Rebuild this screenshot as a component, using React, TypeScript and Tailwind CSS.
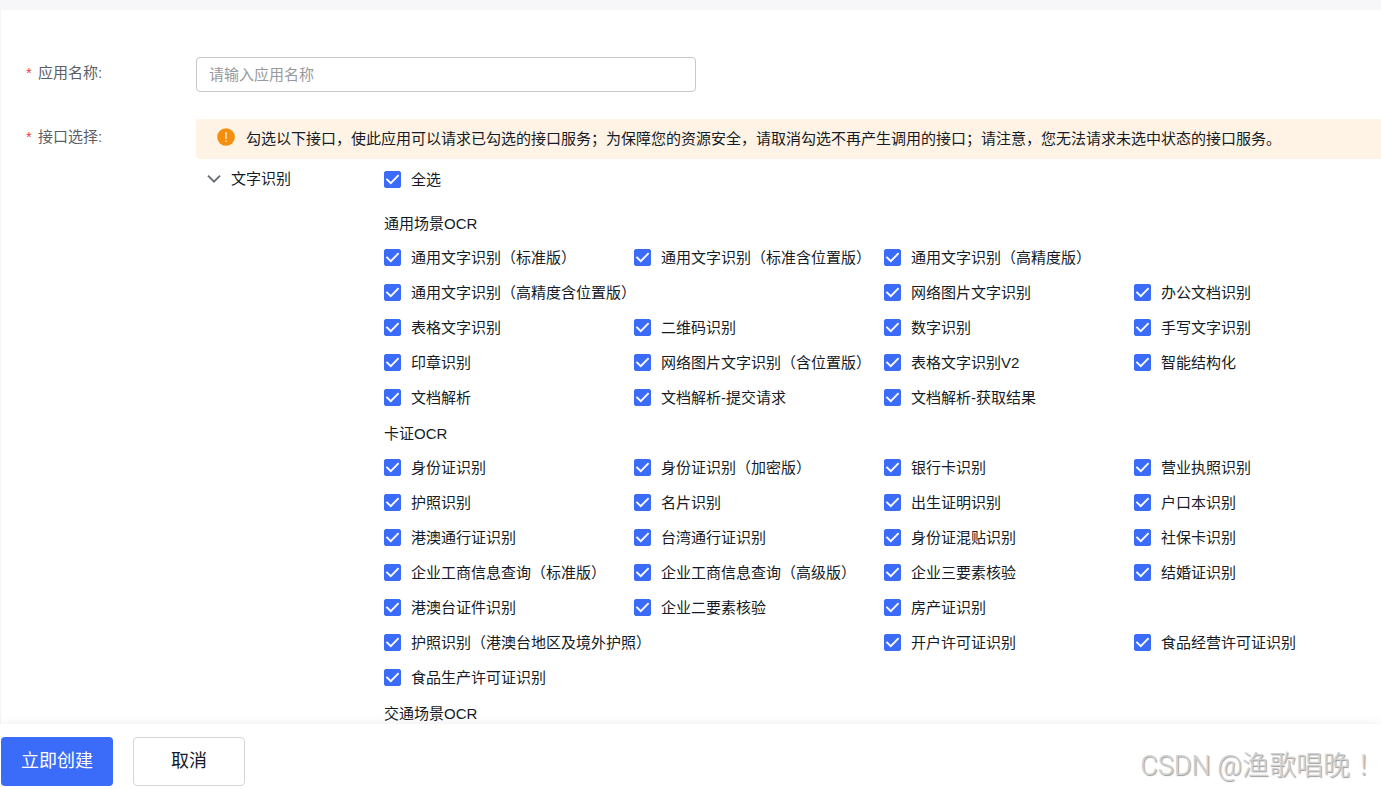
import { useId } from "react";

type Item = { name: string; wide?: boolean };
type Group = { title: string; items: Item[] };

const groups: Group[] = [
  {
    title: "通用场景OCR",
    items: [
      { name: "通用文字识别（标准版）" },
      { name: "通用文字识别（标准含位置版）" },
      { name: "通用文字识别（高精度版）" },
      { name: "通用文字识别（高精度含位置版）", wide: true },
      { name: "网络图片文字识别" },
      { name: "办公文档识别" },
      { name: "表格文字识别" },
      { name: "二维码识别" },
      { name: "数字识别" },
      { name: "手写文字识别" },
      { name: "印章识别" },
      { name: "网络图片文字识别（含位置版）" },
      { name: "表格文字识别V2" },
      { name: "智能结构化" },
      { name: "文档解析" },
      { name: "文档解析-提交请求" },
      { name: "文档解析-获取结果" },
    ],
  },
  {
    title: "卡证OCR",
    items: [
      { name: "身份证识别" },
      { name: "身份证识别（加密版）" },
      { name: "银行卡识别" },
      { name: "营业执照识别" },
      { name: "护照识别" },
      { name: "名片识别" },
      { name: "出生证明识别" },
      { name: "户口本识别" },
      { name: "港澳通行证识别" },
      { name: "台湾通行证识别" },
      { name: "身份证混贴识别" },
      { name: "社保卡识别" },
      { name: "企业工商信息查询（标准版）" },
      { name: "企业工商信息查询（高级版）" },
      { name: "企业三要素核验" },
      { name: "结婚证识别" },
      { name: "港澳台证件识别" },
      { name: "企业二要素核验" },
      { name: "房产证识别" },
      { name: "护照识别（港澳台地区及境外护照）", wide: true },
      { name: "开户许可证识别" },
      { name: "食品经营许可证识别" },
      { name: "食品生产许可证识别" },
    ],
  },
  { title: "交通场景OCR", items: [] },
];

function Check({ name, wide }: Item) {
  const id = useId();
  return (
    <div className={wide ? "col-span-2 flex h-[35px] items-center" : "flex h-[35px] items-center"}>
      <span className="grid shrink-0 place-items-center">
        <input
          id={id}
          type="checkbox"
          defaultChecked
          className="peer col-start-1 row-start-1 size-[17px] appearance-none rounded-xs border border-[#c4c6cc] bg-white checked:border-[#3b6bf9] checked:bg-[#3b6bf9]"
        />
        <svg
          viewBox="0 0 17 17"
          className="pointer-events-none col-start-1 row-start-1 size-[17px] opacity-0 peer-checked:opacity-100"
          fill="none"
          stroke="#fff"
          strokeWidth="1.9"
          aria-hidden="true"
        >
          <path d="M2.4 7.8 L6.8 12.2 L14.6 4.2" />
        </svg>
      </span>
      <label htmlFor={id} className="pl-[10px] whitespace-nowrap">
        {name}
      </label>
    </div>
  );
}

function Star() {
  return <span className="w-3 text-[#e5484d]">*</span>;
}

export default function App() {
  return (
    <div className="flex h-screen flex-col bg-white font-['Liberation_Sans','Noto_Sans_CJK_SC',sans-serif] text-[15px] leading-5 text-[#151b26]">
      <main className="min-h-0 flex-1 overflow-hidden border-t-[10px] border-[#f7f7f9]">
        <form className="border-l border-[#f4f4f6] pt-[47px]">
          <div className="flex">
            <label htmlFor="app-name" className="flex w-[195px] shrink-0 pt-[6px] pl-[25px] text-[#5c5f66]">
              <Star />
              应用名称:
            </label>
            <input
              id="app-name"
              type="text"
              placeholder="请输入应用名称"
              className="h-[35px] w-[500px] rounded-[4px] border border-[#c8c9cc] px-3 outline-none placeholder:text-[#999]"
            />
          </div>

          <div className="mt-[27px] flex">
            <div className="flex w-[195px] shrink-0 pt-2 pl-[25px] text-[#5c5f66]">
              <Star />
              接口选择:
            </div>
            <div className="min-w-0 flex-1">
              <div className="flex h-10 items-center rounded-l-[4px] bg-[#fef3e5] pl-[21px]">
                <svg viewBox="0 0 18 18" className="mb-1 size-[18px] shrink-0" aria-hidden="true">
                  <circle cx="9" cy="9" r="8.8" fill="#f58e0c" />
                  <path d="M9 4 V11 M9 12.4 V14" stroke="#fff" strokeWidth="1.2" />
                </svg>
                <p className="pl-[11px] whitespace-nowrap">
                  勾选以下接口，使此应用可以请求已勾选的接口服务；为保障您的资源安全，请取消勾选不再产生调用的接口；请注意，您无法请求未选中状态的接口服务。
                </p>
              </div>

              <div className="flex">
                <div className="w-[188px] shrink-0 pt-[10px]">
                  <button type="button" className="flex items-center pl-[11px]">
                    <svg
                      viewBox="0 0 14 14"
                      className="size-[14px]"
                      fill="none"
                      stroke="#6b6e75"
                      strokeWidth="2"
                      aria-hidden="true"
                    >
                      <path d="M1 3.6 L7 9.6 L13 3.6" />
                    </svg>
                    <span className="pl-[10px]">文字识别</span>
                  </button>
                </div>
                <div className="min-w-0 flex-1 pt-[3px]">
                  <Check name="全选" />
                  <div className="pt-2">
                    {groups.map((group) => (
                      <section key={group.title}>
                        <h3 className="flex h-[35px] items-center pt-0.5">{group.title}</h3>
                        <div className="grid grid-cols-[repeat(4,250px)]">
                          {group.items.map((item) => (
                            <Check key={item.name} {...item} />
                          ))}
                        </div>
                      </section>
                    ))}
                  </div>
                </div>
              </div>
            </div>
          </div>
        </form>
      </main>

      <footer className="z-10 flex items-center justify-between bg-white pt-[13px] pr-1 pb-[3px] pl-px shadow-[0_0_10px_rgba(0,0,0,0.08)]">
        <div className="flex gap-5 text-lg">
          <button type="button" className="h-[49px] w-28 rounded-[4px] bg-[#3b6bf9] pb-0.5 text-white">
            立即创建
          </button>
          <button type="button" className="h-[49px] w-28 rounded-[4px] border border-[#d4d6d9] bg-white pb-0.5">
            取消
          </button>
        </div>
        <p className="pt-2 font-['Roboto','Noto_Sans_CJK_TC',sans-serif] text-[27px] leading-8 font-light text-[#d2d2d2] [text-shadow:1px_1px_1px_#999]">
          CSDN @渔歌唱晚！
        </p>
      </footer>
    </div>
  );
}
